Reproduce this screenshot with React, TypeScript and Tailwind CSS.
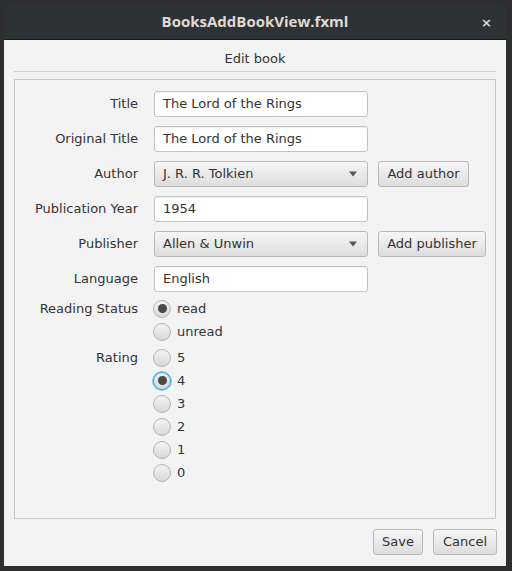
const font = "font-['DejaVu_Sans',sans-serif]";

const TextField = ({ value }: { value: string }) => (
  <div className="w-[214px] h-[26px] flex items-center px-[8px] bg-white border border-[#c2c2c2] rounded-[3px] shadow-[inset_0_1px_1px_rgba(0,0,0,0.06)]">
    {value}
  </div>
);

const Combo = ({ value }: { value: string }) => (
  <div className="w-[214px] h-[26px] flex items-center justify-between pl-[8px] pr-[9px] border border-[#b8b8b8] rounded-[3px] bg-linear-to-b from-[#f6f6f6] to-[#dddddd]">
    <span>{value}</span>
    <svg width="10" height="6" viewBox="0 0 10 6">
      <path d="M1 0.5 L9 0.5 L5 5.5 Z" fill="#555" />
    </svg>
  </div>
);

const Button = ({ children, w }: { children: string; w: string }) => (
  <div
    className={`${w} h-[26px] flex items-center justify-center border border-[#b8b8b8] rounded-[3px] bg-linear-to-b from-[#f6f6f6] to-[#dddddd]`}
  >
    {children}
  </div>
);

const Radio = ({ checked, focused }: { checked?: boolean; focused?: boolean }) => (
  <div
    className={`w-[18px] h-[18px] rounded-full flex items-center justify-center border ${
      focused ? "border-[#1fa3d8] ring-1 ring-[#7fcbea]" : "border-[#b3b3b3]"
    } bg-linear-to-b from-[#f4f4f4] to-[#d8d8d8]`}
  >
    {checked && <div className="w-[9px] h-[9px] rounded-full bg-[#4a4a4a]" />}
  </div>
);

const Row = ({ label, children }: { label: string; children: React.ReactNode }) => (
  <div className="flex items-center h-[26px]">
    <div className="w-[123px] text-right">{label}</div>
    <div className="ml-[16px] flex items-center gap-[10px]">{children}</div>
  </div>
);

const RadioItem = ({ label, checked, focused }: { label: string; checked?: boolean; focused?: boolean }) => (
  <div className="flex items-center h-[23px] gap-[6px]">
    <Radio checked={checked} focused={focused} />
    <span>{label}</span>
  </div>
);

export default function App() {
  return (
    <div className={`w-[512px] h-[571px] bg-[#2e2e2e] pt-[3px] px-[4px] ${font} text-[13px] text-[#333]`}>
      <div className="w-[502px] h-[563px] flex flex-col rounded-t-[8px] overflow-hidden">
        {/* TITLE BAR */}
        <div className="h-[37px] bg-[#2d3235] border-b border-[#1a1c1d] flex items-center justify-center relative">
          <span className="font-['Open_Sans',sans-serif] font-bold text-[15px] text-[#dfdbd2]">
            BooksAddBookView.fxml
          </span>
          <span className="absolute right-[14px] top-[10px] text-[13px] text-[#dfdbd2] font-bold">×</span>
        </div>
        {/* CONTENT */}
        <div className="flex-1 bg-[#f3f3f3] pl-[10px] pr-[10px] flex flex-col">
          <div className="h-[32px] border-b border-[#cfcfcf] flex items-end justify-center pb-[3px]">
            Edit book
          </div>
          <div className="mt-[7px] h-[440px] border border-[#c8c8c8] pt-[11px] flex flex-col">
            <div className="flex flex-col gap-[9px]">
              <Row label="Title">
                <TextField value="The Lord of the Rings" />
              </Row>
              <Row label="Original Title">
                <TextField value="The Lord of the Rings" />
              </Row>
              <Row label="Author">
                <Combo value="J. R. R. Tolkien" />
                <Button w="w-[91px]">Add author</Button>
              </Row>
              <Row label="Publication Year">
                <TextField value="1954" />
              </Row>
              <Row label="Publisher">
                <Combo value="Allen & Unwin" />
                <Button w="w-[108px]">Add publisher</Button>
              </Row>
              <Row label="Language">
                <TextField value="English" />
              </Row>
            </div>
            <div className="flex mt-[5px]">
              <div className="w-[123px] text-right leading-[23px]">Reading Status</div>
              <div className="ml-[15px] flex flex-col">
                <RadioItem label="read" checked />
                <RadioItem label="unread" />
              </div>
            </div>
            <div className="flex mt-[3px]">
              <div className="w-[123px] text-right leading-[23px]">Rating</div>
              <div className="ml-[15px] flex flex-col">
                <RadioItem label="5" />
                <RadioItem label="4" checked focused />
                <RadioItem label="3" />
                <RadioItem label="2" />
                <RadioItem label="1" />
                <RadioItem label="0" />
              </div>
            </div>
          </div>
          <div className="flex justify-end gap-[10px] mt-[10px] mr-[-1px]">
            <Button w="w-[50px]">Save</Button>
            <Button w="w-[64px]">Cancel</Button>
          </div>
        </div>
      </div>
    </div>
  );
}
